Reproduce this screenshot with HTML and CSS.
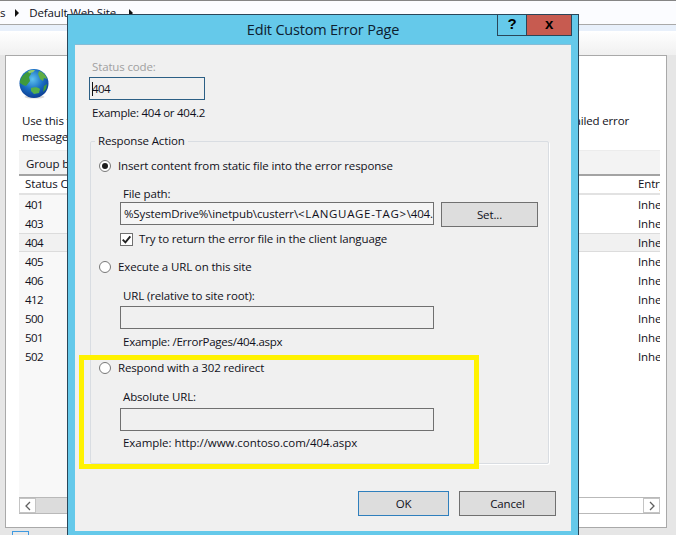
FILE: index.html
```html
<!DOCTYPE html>
<html lang="en">
<head>
<meta charset="utf-8">
<title>Edit Custom Error Page</title>
<link rel="stylesheet" href="styles.css">
</head>
<body>
<div class="screen">
  <div class="crumbs">
    <span>s</span><i class="tri"></i><span class="crumb">Default Web Site</span><i class="tri"></i>
  </div>
  <div class="band"></div>
  <div class="toolbar"></div>
  <div class="desk">
    <div class="pane">
      <svg class="globe" viewBox="0 0 30 30" width="30" height="30" aria-hidden="true">
        <defs>
          <radialGradient id="sea" cx="45%" cy="35%" r="65%">
            <stop offset="0" stop-color="#5fc3ee"/>
            <stop offset=".55" stop-color="#1a6fc4"/>
            <stop offset="1" stop-color="#0d3f94"/>
          </radialGradient>
        </defs>
        <ellipse cx="15.5" cy="28" rx="10" ry="1.6" fill="#d9d9d9"/>
        <circle cx="15" cy="14.5" r="14.5" fill="url(#sea)"/>
        <path d="M1 12C3 6 7 3 11 2l1 3-2 3 1 4-4 5-3-1-3-2z" fill="#3f9a3c"/>
        <path d="M9 2.2c2-1 5-1.5 7-1l-2 2-4 1z" fill="#8fcb6a"/>
        <path d="M20 2c4 1 7 4 8 8l-3-1-1 3-3-2-2-5z" fill="#5fae45"/>
        <path d="M12 19c3-1 7-1 9 1l-1 4-5 1-3-3z" fill="#56b04a"/>
        <path d="M25 17l3-2-1 5-3 3z" fill="#3f9a3c"/>
      </svg>
      <div class="intro">
        <span>Use this feature to configure</span><span>detailed error</span>
      </div>
      <div class="intro intro-second"><span>messages for the site.</span></div>
      <div class="groupbar">Group by:</div>
      <div class="table">
        <div class="row head"><span class="code">Status Code</span><span class="entry">Entry Type</span></div>
        <div class="row"><span class="code num">401</span><span class="entry">Inherited</span></div>
        <div class="row"><span class="code num">403</span><span class="entry">Inherited</span></div>
        <div class="row selected"><span class="code num">404</span><span class="entry">Inherited</span></div>
        <div class="row"><span class="code num">405</span><span class="entry">Inherited</span></div>
        <div class="row"><span class="code num">406</span><span class="entry">Inherited</span></div>
        <div class="row"><span class="code num">412</span><span class="entry">Inherited</span></div>
        <div class="row"><span class="code num">500</span><span class="entry">Inherited</span></div>
        <div class="row"><span class="code num">501</span><span class="entry">Inherited</span></div>
        <div class="row"><span class="code num">502</span><span class="entry">Inherited</span></div>
      </div>
      <div class="hscroll">
        <div class="sbtn"><svg viewBox="0 0 8 10" width="8" height="10" aria-hidden="true"><path d="M6 1 2 5l4 4" fill="none" stroke="#606060" stroke-width="1.3"/></svg></div>
        <div class="thumb"></div>
        <div class="track"></div>
        <div class="sbtn"><svg viewBox="0 0 8 10" width="8" height="10" aria-hidden="true"><path d="M2 1l4 4-4 4" fill="none" stroke="#606060" stroke-width="1.3"/></svg></div>
      </div>
    </div>
    <div class="taskitem"></div>
  </div>

  <div class="dialog">
    <div class="titlebar">
      <div class="title">Edit Custom Error Page</div>
      <div class="winbtn help">?</div>
      <div class="winbtn close">x</div>
    </div>
    <div class="panel">
      <div class="label muted">Status code:</div>
      <div class="field status"><span class="caret"></span><span class="num">404</span></div>
      <div class="label example-top tight">Example: 404 or 404.2</div>

      <fieldset class="group">
        <legend>Response Action</legend>
        <div class="option"><i class="radio on"></i><span>Insert content from static file into the error response</span></div>
        <div class="sub sub-first">
          <div class="label">File path:</div>
          <div class="filerow">
            <div class="field wide">%SystemDrive%\inetpub\custerr\<span class="caps">&lt;LANGUAGE-TAG&gt;</span>\404.</div>
            <div class="btn set">Set...</div>
          </div>
          <div class="check">
            <svg class="box" viewBox="0 0 13 13" width="13" height="13" aria-hidden="true"><rect x=".5" y=".5" width="12" height="12" fill="#fff" stroke="#707070"/><path d="M2.7 6.6l2.7 2.8 4.9-6" fill="none" stroke="#222" stroke-width="1.9"/></svg>
            <span>Try to return the error file in the client language</span>
          </div>
        </div>
        <div class="option opt-2"><i class="radio"></i><span>Execute a URL on this site</span></div>
        <div class="sub sub-url">
          <div class="label">URL (relative to site root):</div>
          <div class="field wide gap-2"></div>
          <div class="label gap-5 tight">Example: /ErrorPages/404.aspx</div>
        </div>
        <div class="option opt-3"><i class="radio"></i><span>Respond with a 302 redirect</span></div>
        <div class="sub sub-url">
          <div class="label">Absolute URL:</div>
          <div class="field wide gap-3"></div>
          <div class="label gap-4 loose">Example: http://www.contoso.com/404.aspx</div>
        </div>
      </fieldset>

      <div class="footer">
        <div class="btn ok">OK</div>
        <div class="btn cancel">Cancel</div>
      </div>
    </div>
    <div class="highlight"></div>
  </div>
</div>
</body>
</html>
```
FILE: styles.css
```css
* { box-sizing: border-box; }
html, body { margin: 0; padding: 0; }
body {
  font-family: "Open Sans", "Noto Sans", "Liberation Sans", sans-serif;
  font-size: 11.5px;
  line-height: 16px;
  letter-spacing: -0.14px;
  color: #101020;
}
.num { letter-spacing: -0.6px; }
.tight { letter-spacing: -0.26px; }
.loose { letter-spacing: -0.05px; }
.caps { letter-spacing: 0.65px; }
.screen {
  position: relative;
  width: 676px;
  height: 535px;
  overflow: hidden;
  background: #e6e6e6;
  display: flex;
  flex-direction: column;
}

/* background window */
.crumbs {
  height: 25px;
  flex: none;
  display: flex;
  align-items: center;
  background: #fbfcff;
  border-top: 1px solid #858585;
  border-bottom: 1px solid #a9a9a9;
}
.tri {
  width: 0;
  height: 0;
  margin-left: 10px;
  border-left: 4px solid #111;
  border-top: 4px solid transparent;
  border-bottom: 4px solid transparent;
}
.crumb { margin-left: 10px; margin-right: 3px; }
.band { height: 6px; flex: none; background: #e8f0fb; }
.toolbar { height: 24px; flex: none; background: linear-gradient(#fff, #f0f0f0); }
.desk { flex: 1; display: flex; flex-direction: column; padding-left: 5px; }
.pane {
  width: 662px;
  height: 473px;
  flex: none;
  background: #fff;
  border: 1px solid #a9a9a9;
  padding: 13px 6px 0 13px;
  display: flex;
  flex-direction: column;
}
.globe { display: block; flex: none; }
.intro {
  display: flex;
  justify-content: space-between;
  width: 607px;
  margin: 14px 0 0 3px;
  height: 16px;
  flex: none;
}
.intro-second { margin-top: 0; }
.groupbar {
  height: 26px;
  flex: none;
  margin-top: 5px;
  padding: 5px 0 0 7px;
  background: #f3f3f3;
  border-top: 1px solid #ececec;
  border-bottom: 2px solid #a3a3a3;
}
.table { height: 322px; flex: none; background: linear-gradient(90deg, #f8f8f8 0 48px, #fff 48px); }
.row {
  display: flex;
  justify-content: space-between;
  height: 19px;
  padding-left: 6px;
  align-items: center;
  overflow: hidden;
}
.row.head { background: #fff; border-bottom: 2px solid #e2e2e2; padding-bottom: 1px; }
.row.selected { background: #f1f1f1; box-shadow: inset 0 1px 0 #dcdcdc, inset 0 -1px 0 #dcdcdc; }
.entry { width: 22px; white-space: nowrap; overflow: hidden; }
.hscroll {
  height: 17px;
  flex: none;
  display: flex;
  border: 1px solid #b9b9b9;
  border-width: 1px 0;
  margin-top: -1px;
}
.sbtn {
  width: 17px;
  flex: none;
  display: flex;
  align-items: center;
  justify-content: center;
  background: #fff;
  border: 1px solid #c4c4c4;
}
.thumb { width: 150px; flex: none; background: #dcdcdc; }
.track { flex: 1; background: #fff; }
.taskitem {
  width: 17px;
  height: 6px;
  margin: 3px 0 0 7px;
  background: #e9e9e9;
  border: 1px solid #3f9ae0;
  border-bottom: 0;
  flex: none;
}

/* dialog over the window */
.dialog {
  position: absolute;
  left: 67px;
  top: 14px;
  width: 512px;
  height: 530px;
  background: #65c9ea;
  border: 1px solid #2a4659;
  border-bottom: 0;
  display: flex;
  flex-direction: column;
}
.titlebar { height: 29px; flex: none; display: flex; align-items: flex-start; position: relative; padding-right: 6px; justify-content: flex-end; }
.title {
  position: absolute;
  left: 0;
  right: 0;
  top: 5px;
  text-align: center;
  font-size: 14.5px;
  letter-spacing: -0.2px;
  line-height: 20px;
  color: #0d2030;
}
.winbtn {
  height: 21px;
  border: 1px solid #2a4659;
  border-top: 0;
  text-align: center;
  font-family: "Liberation Sans", sans-serif;
  font-weight: 700;
  color: #000;
  font-size: 15px;
  line-height: 17px;
  position: relative;
}
.help { width: 29px; border-right: 0; }
.close { width: 46px; background: #c75b50; }
.panel {
  margin: 0 7px;
  height: 487px;
  flex: none;
  background: #f0f0f0;
  border-top: 1px solid #86bcd6;
  padding: 14px 15px 0 14px;
}
.label { padding-left: 3px; height: 16px; white-space: nowrap; }
.muted { color: #a0a0a0; }
.example-top { margin-top: 5px; }
.field {
  height: 23px;
  border: 1px solid #707070;
  background: #f0f0f0;
  line-height: 21px;
  padding-left: 3px;
  overflow: hidden;
  white-space: nowrap;
}
.status { width: 116px; margin-top: 2px; border-color: #2b5f85; position: relative; padding-left: 2px; }
.caret { position: absolute; left: 2px; top: 4px; height: 14px; border-left: 1px solid #111; }
.wide { width: 314px; }
.group {
  margin: 12px 0 0 1px;
  padding: 9px 0 12px 8px;
  width: 459px;
  min-width: 0;
  border: 1px solid #d9dde2;
  border-radius: 2px;
  box-shadow: 1px 1px 0 #fff;
}
.group legend { padding: 0 3px; margin-left: -4px; line-height: 16px; }
.option { display: flex; align-items: center; gap: 7px; height: 16px; }
.radio {
  width: 12px;
  height: 12px;
  flex: none;
  border: 1px solid #777;
  border-radius: 50%;
  background: #fff;
  display: flex;
  align-items: center;
  justify-content: center;
}
.radio.on::after { content: ""; width: 6px; height: 6px; border-radius: 50%; background: #1c1c1c; }
.opt-2 { margin-top: 12px; }
.opt-3 { margin-top: 10px; }
.sub { margin-left: 21px; }
.sub-first { margin-top: 12px; }
.sub-url { margin-top: 13px; }
.filerow { display: flex; gap: 7px; align-items: flex-start; }
.filerow .field { background: #f5f5f5; }
.btn {
  background: #dddddd;
  border: 1px solid #707070;
  text-align: center;
  height: 25px;
  line-height: 23px;
}
.set { width: 97px; }
.check { display: flex; align-items: center; gap: 6px; margin-top: 4px; height: 16px; }
.box { flex: none; display: block; }
.gap-2 { margin-top: 2px; }
.gap-3 { margin-top: 3px; }
.gap-4 { margin-top: 4px; }
.gap-5 { margin-top: 5px; }
.footer { display: flex; justify-content: flex-end; gap: 10px; margin-top: 27px; }
.ok { width: 91px; border-color: #2f7fbd; }
.cancel { width: 97px; }

/* annotation drawn on top of the screenshot */
.highlight {
  position: absolute;
  left: 11px;
  top: 340px;
  width: 400px;
  height: 114px;
  border: 5px solid #fff200;
}
```
